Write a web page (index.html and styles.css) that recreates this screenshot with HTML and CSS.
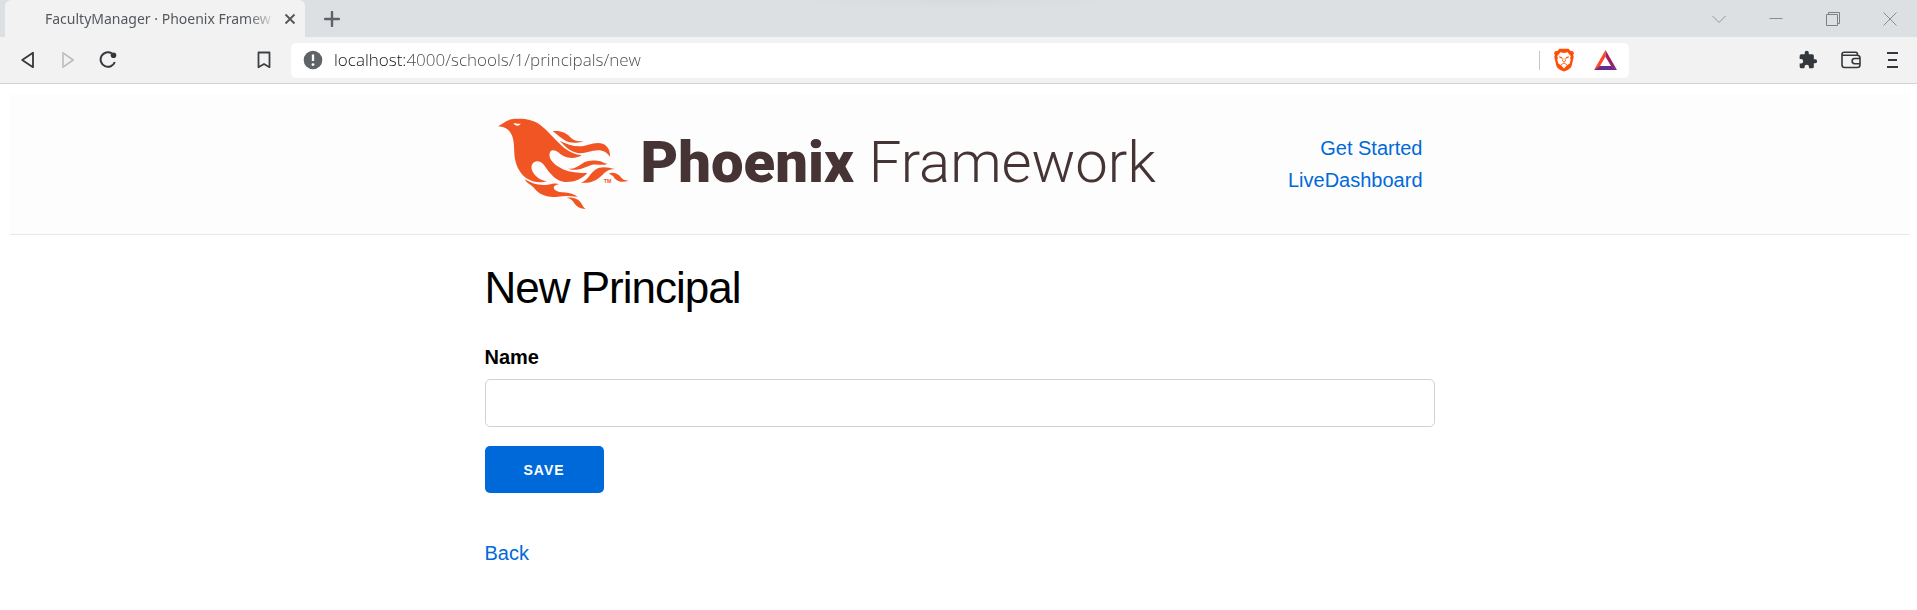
FILE: index.html
```html
<!DOCTYPE html>
<html lang="en">
<head>
<meta charset="utf-8">
<title>FacultyManager · Phoenix Framework</title>
<link rel="stylesheet" href="styles.css">
</head>
<body>
<div class="browser">
  <div class="tabstrip">
    <div class="tab">
      <span class="tab-title">FacultyManager · Phoenix Framew</span>
      <button class="icon-btn tab-close" aria-label="Close tab"><svg width="12" height="12" viewBox="0 0 12 12"><path d="M1.5 1.5l9 9M10.5 1.5l-9 9" fill="none" stroke="#54585c" stroke-width="1.9"/></svg></button>
    </div>
    <button class="icon-btn new-tab" aria-label="New tab"><svg width="16" height="16" viewBox="0 0 16 16"><path d="M8 1v14M1 8h14" fill="none" stroke="#5f6368" stroke-width="2.4" stroke-linecap="round"/></svg></button>
    <div class="window-controls">
      <button class="icon-btn" aria-label="Search tabs"><svg width="14" height="14" viewBox="0 0 14 14"><path d="M.5 4L7 10.5 13.5 4" fill="none" stroke="#92959a"/></svg></button>
      <button class="icon-btn" aria-label="Minimize"><svg width="14" height="14" viewBox="0 0 14 14"><path d="M.5 6.500h13" fill="none" stroke="#8a8d90"/></svg></button>
      <button class="icon-btn" aria-label="Restore"><svg width="14" height="14" viewBox="0 0 14 14"><path d="M.5 2.5h11v11H.5zM2.5 2.5v-2h11v11h-2" fill="none" stroke="#7e8184"/></svg></button>
      <button class="icon-btn" aria-label="Close window"><svg width="14" height="14" viewBox="0 0 14 14"><path d="M.5.5l13 13M13.5.5l-13 13" fill="none" stroke="#8a8d90"/></svg></button>
    </div>
  </div>
  <div class="toolbar">
    <div class="nav-tools">
      <button class="icon-btn" aria-label="Back"><svg width="18" height="18" viewBox="0 0 18 18"><path d="M14 1.8v14.400L3.200 9z" fill="none" stroke="#34383c" stroke-width="1.8" stroke-linejoin="round"/></svg></button>
      <button class="icon-btn" aria-label="Forward"><svg width="18" height="18" viewBox="0 0 18 18"><path d="M4 1.8v14.400L14.200 9z" fill="none" stroke="#bcbcbc" stroke-width="1.6" stroke-linejoin="round"/></svg></button>
      <button class="icon-btn" aria-label="Reload"><svg width="18" height="18" viewBox="0 0 18 18"><path d="M12.800 2.300A7.300 7.300 0 1 0 15.800 11" fill="none" stroke="#34383c" stroke-width="2"/><circle cx="14.500" cy="4.200" r="2.800" fill="#34383c"/></svg></button>
      <button class="icon-btn bookmark" aria-label="Bookmark"><svg width="18" height="18" viewBox="0 0 18 18"><path d="M3.500 1.500h11v14.700L9 13l-5.500 3.200z" fill="none" stroke="#3d4145" stroke-width="1.8" stroke-linejoin="round"/></svg></button>
    </div>
    <div class="address">
      <svg width="20" height="20" viewBox="0 0 20 20"><circle cx="10" cy="10" r="9.300" fill="#5f6368"/><path d="M10 4.500v6.500" stroke="#fff" stroke-width="2.300"/><circle cx="10" cy="14.600" r="1.400" fill="#fff"/></svg>
      <input class="url" type="text" aria-label="Address" value="localhost:4000/schools/1/principals/new">
      <span class="divider"></span>
      <button class="icon-btn" aria-label="Shields"><svg width="20" height="24" viewBox="0 0 20 24"><path d="M5.500.8h9l2.200 2.200 1.800-.1L20 5l-.8 2 .5 2-2 8.500c-.5 2-2 3.300-4 4.500L10 23.600 6.300 22c-2-1.200-3.500-2.500-4-4.500L.3 9l.5-2L0 5l1.500-2.100 1.800.1z" fill="#ff4e08"/><path d="M6.500 4.300L10 5l3.500-.7 3.200 3.800-.6 2.500.6 1-1 4-3 1.900L10 20.500 7.300 17.500l-3-1.900-1-4 .6-1-.6-2.500z" fill="#fff"/><path d="M5 8.300l3.200.9-.2 1.200-2.500-.6zM15 8.300l-3.200.9.2 1.200 2.500-.6zM8.500 13.200h3L10 14.700z" fill="#ff4e08"/><path d="M9 10l-.5 3.200M11 10l.5 3.200M7 16.700l3-1.500 3 1.500" fill="none" stroke="#ff4e08" stroke-width=".8"/></svg></button>
      <button class="icon-btn" aria-label="Rewards"><svg width="23" height="20" viewBox="0 0 23 20"><path d="M11.500 0L0 20l7-4 4.500-8.500z" fill="#ff4724"/><path d="M11.500 0L23 20l-7-4-4.500-8.500z" fill="#9e1f63"/><path d="M0 20h23l-6-4H6z" fill="#662d91"/><path d="M11.500 6.800L17 16H6z" fill="#fff"/></svg></button>
    </div>
    <div class="right-tools">
      <button class="icon-btn" aria-label="Extensions"><svg width="20" height="20" viewBox="0 0 24 24"><path d="M20.500 11H19V7a2 2 0 0 0-2-2h-4V3.500a2.500 2.500 0 0 0-5 0V5H4a2 2 0 0 0-2 2v3.800h1.500a2.700 2.700 0 0 1 0 5.400H2V20a2 2 0 0 0 2 2h3.800v-1.500a2.700 2.700 0 0 1 5.400 0V22H17a2 2 0 0 0 2-2v-4h1.500a2.500 2.500 0 0 0 0-5z" fill="#34383c"/></svg></button>
      <button class="icon-btn" aria-label="Wallet"><svg width="20" height="18" viewBox="0 0 20 18"><path d="M1 3.300C1 2 2 1.200 3.200 1.200h11.500c1 0 1.800.8 1.800 2.300M1 3.300v10.500c0 1.600.9 2.700 2.500 2.700h12.700c1.600 0 2.800-1.100 2.800-2.700V7c0-1.700-1.100-2.800-2.800-2.800H1.500M19 7.500h-5.300a2.600 2.600 0 0 0 0 5.200H19" fill="none" stroke="#34383c" stroke-width="1.600"/></svg></button>
      <button class="icon-btn" aria-label="Menu"><svg width="18" height="18" viewBox="0 0 18 18"><path d="M3 2h11M4 9h9M3 16h11" fill="none" stroke="#34383c" stroke-width="2"/></svg></button>
    </div>
  </div>
</div>

<div class="page">
  <header class="site-header">
    <div class="header-inner">
      <a class="logo" href="#">
        <svg class="bird" width="132" height="92" viewBox="51 54 396 276" aria-hidden="true">
          <g fill="#f15524">
            <path fill-rule="evenodd" d="M54 79C69 71 76 62 94 58C126 54 158 58 180 74C204 92 222 116 246 138C264 154 282 163 305 166C288 176 268 176 250 168C238 162 232 151 218 151C208 152 206 166 211 176C220 192 239 204 257 211C282 219 300 219 322 219C307 237 282 247 255 246C232 244 221 231 207 216C195 202 190 184 171 184C156 186 151 200 157 213C165 229 179 240 201 244C181 250 159 246 143 237C122 225 108 200 104 171C101 146 105 116 90 96C81 84 70 80 54 79ZM100 70C105 78 119 81 122 70C114 74 109 69 100 70Z"/>
            <path d="M218 94C240 91 258 98 270 111C281 123 295 125 311 123C297 131 277 128 263 125C246 119 234 104 218 94Z"/>
            <path d="M239 122C259 132 277 139 299 139C325 138 346 122 370 132C385 139 391 154 390 171C381 157 370 151 355 151C331 152 315 162 293 159C270 154 255 139 239 122Z"/>
            <path d="M264 206C283 207 292 200 306 191C323 180 339 181 356 183C369 184 373 192 383 191C367 199 350 190 334 195C313 202 294 216 264 206Z"/>
            <path d="M302 248C323 242 328 222 346 209C363 197 384 202 405 207C387 208 377 214 368 224C350 242 329 251 302 248Z"/>
            <path d="M386 221C402 214 416 222 424 233C430 241 438 240 446 242C430 248 414 246 405 236C399 227 395 223 386 221Z"/>
            <path d="M134 238C156 251 177 258 204 254C220 251 229 249 238 253C225 254 217 261 224 269C239 283 272 270 293 291C271 287 252 288 233 290C198 294 178 282 164 266C153 253 141 251 134 238Z"/>
            <path d="M260 293C282 291 298 298 305 312C309 319 311 323 317 327C301 326 290 320 284 311C277 300 272 295 260 293Z"/>
          </g>
          <text class="tm" x="371" y="250">TM</text>
        </svg>
        <span class="wordmark"><span class="word-bold">Phoenix</span><span class="word-light">Framework</span></span>
      </a>
      <nav class="links">
        <a href="#">Get Started</a>
        <a href="#">LiveDashboard</a>
      </nav>
    </div>
  </header>

  <main class="container">
    <h1>New Principal</h1>
    <form class="form">
      <label for="name">Name</label>
      <input class="field" id="name" type="text">
      <button class="save" type="submit">SAVE</button>
    </form>
    <a class="back" href="#">Back</a>
  </main>
</div>
</body>
</html>
```
FILE: styles.css
```css
* { box-sizing: border-box; }
body {
  margin: 0;
  background: #fff;
  color: #000;
  font-family: "Liberation Sans", Arial, sans-serif;
  font-size: 20px;
  line-height: 32px;
}
a { color: #0069d9; text-decoration: none; }
svg { display: block; flex: none; }
.icon-btn { padding: 0; border: 0; background: none; flex: none; }

.browser { border-bottom: 1px solid #d3d4d5; background: #f2f2f2; }
.tabstrip {
  display: flex;
  align-items: center;
  height: 37px;
  padding: 0 20px 0 5px;
  background: radial-gradient(ellipse 170px 10px at 50% 0, #d7dbde, #dce0e3);
}
.tab {
  display: flex;
  align-items: center;
  gap: 8px;
  width: 300px;
  height: 37px;
  padding: 0 9px 0 40px;
  border-radius: 6px 6px 0 0;
  background: #f2f2f2;
}
.tab-title {
  flex: 1;
  overflow: hidden;
  white-space: nowrap;
  font: 14px/20px "Noto Sans", sans-serif;
  color: #54585d;
  mask-image: linear-gradient(to right, #000 88%, transparent);
}
.new-tab { margin-left: 19px; }
.window-controls { display: flex; gap: 43px; margin-left: auto; }

.toolbar { display: flex; align-items: center; height: 46px; padding-right: 15px; }
.nav-tools { display: flex; gap: 22px; width: 291px; padding: 0 18px 0 19px; }
.bookmark { margin-left: auto; }
.address {
  display: flex;
  align-items: center;
  flex: 1;
  height: 35px;
  padding: 0 12px;
  border-radius: 5px;
  background: #fff;
}
.url {
  flex: 1;
  min-width: 0;
  margin-left: 11px;
  padding: 0;
  border: 0;
  font: 300 17px/24px "Open Sans", sans-serif;
  color: transparent;
  background: linear-gradient(to right, #101316 73px, #45494e 73px);
  background-clip: text;
}
.divider { width: 1px; height: 19px; margin-right: 14px; background: #c4c6c8; }
.address .icon-btn + .icon-btn { margin-left: 20px; }
.right-tools { display: flex; align-items: center; justify-content: flex-end; gap: 23px; width: 273px; }

.page { margin: 10px 8px 0 10px; }
.site-header { border-bottom: 1px solid #e7e7e7; background: #fdfdfd; }
.header-inner, .container { max-width: 950px; margin: 0 auto; }
.header-inner {
  display: flex;
  align-items: center;
  justify-content: space-between;
  height: 140px;
  padding: 0 12px;
}
.logo { display: flex; align-items: center; gap: 12px; color: #463435; }
.tm { font: bold 16px "Liberation Sans", sans-serif; fill: #f15524; }
.wordmark {
  display: flex;
  align-items: baseline;
  gap: 15px;
  padding-bottom: 4px;
  font-family: Roboto, sans-serif;
  font-size: 58px;
  line-height: 80px;
}
.word-bold { font-weight: 900; }
.word-light { font-weight: 300; }
.links { display: flex; flex-direction: column; text-align: right; }

h1 { margin: 25px 0; font-size: 44px; font-weight: 400; line-height: 56px; letter-spacing: -1px; }
.form { display: flex; flex-direction: column; align-items: flex-start; }
label { margin-bottom: 6px; font-weight: 700; }
.field {
  width: 100%;
  height: 48px;
  margin-bottom: 19px;
  padding: 8px 12px;
  border: 1px solid #d1d1d1;
  border-radius: 5px;
  font: inherit;
  background: #fff;
}
.save {
  height: 47px;
  padding: 0 39px;
  border: 0;
  border-radius: 5px;
  background: #0069d9;
  color: #fff;
  font: 700 14px/20px "Liberation Sans", Arial, sans-serif;
  letter-spacing: 1px;
}
.back { display: inline-block; margin-top: 44px; }
```
